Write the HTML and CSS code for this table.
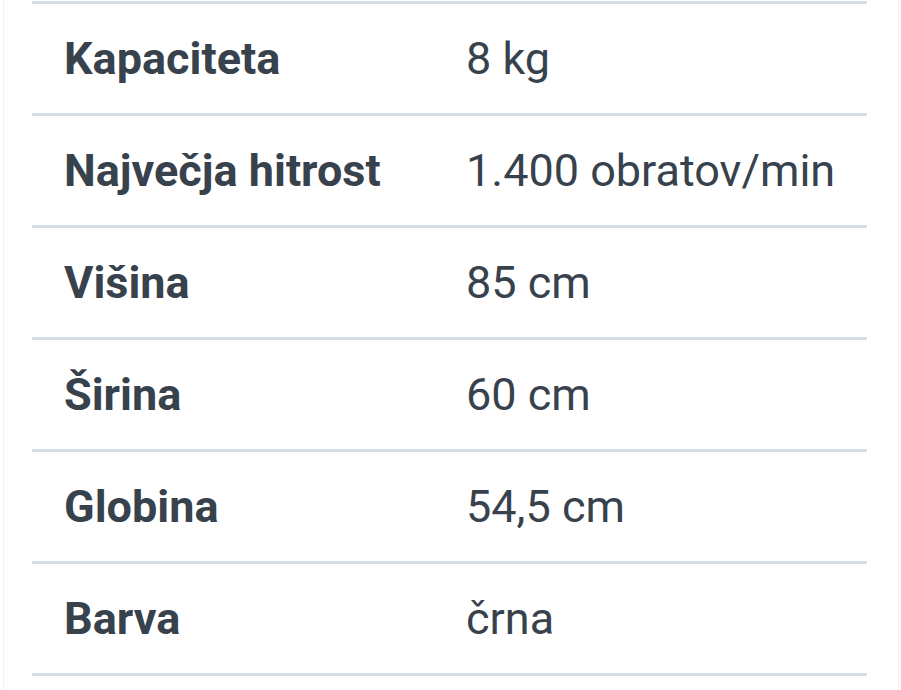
FILE: index.html
```html
<!DOCTYPE html>
<html lang="sl">
<head>
<meta charset="utf-8">
<link rel="stylesheet" href="styles.css">
</head>
<body>
<div class="frame">
  <div class="specs">
    <div class="row"><div class="label">Kapaciteta</div><div class="value">8 kg</div></div>
    <div class="row"><div class="label">Največja hitrost</div><div class="value">1.400 obratov/min</div></div>
    <div class="row"><div class="label">Višina</div><div class="value">85 cm</div></div>
    <div class="row"><div class="label">Širina</div><div class="value">60 cm</div></div>
    <div class="row"><div class="label">Globina</div><div class="value">54,5 cm</div></div>
    <div class="row"><div class="label">Barva</div><div class="value">črna</div></div>
  </div>
</div>
</body>
</html>
```
FILE: styles.css
```css
html, body {
  margin: 0;
  padding: 0;
  background: #ffffff;
}
body {
  font-family: Roboto, "Liberation Sans", sans-serif;
  color: #37424c;
}
.frame {
  width: 901px;
  height: 690px;
  box-sizing: border-box;
  padding: 1px 0 0 0;
  position: relative;
}
.frame::before,
.frame::after {
  content: "";
  position: absolute;
  top: 0;
  bottom: 0;
  width: 1px;
  background: #f0f2f4;
}
.frame::before { left: 3px; }
.frame::after { right: 2px; }
.specs {
  margin-left: 32px;
  width: 835px;
  border-top: 3px solid #d3dfe8;
}
.row {
  display: grid;
  grid-template-columns: 434px 1fr;
  align-items: center;
  height: 109px;
  border-bottom: 3px solid #d3dfe8;
}
.label {
  padding-left: 32px;
  font-weight: 700;
  font-size: 45px;
}
.value {
  font-weight: 400;
  font-size: 45px;
}
```
